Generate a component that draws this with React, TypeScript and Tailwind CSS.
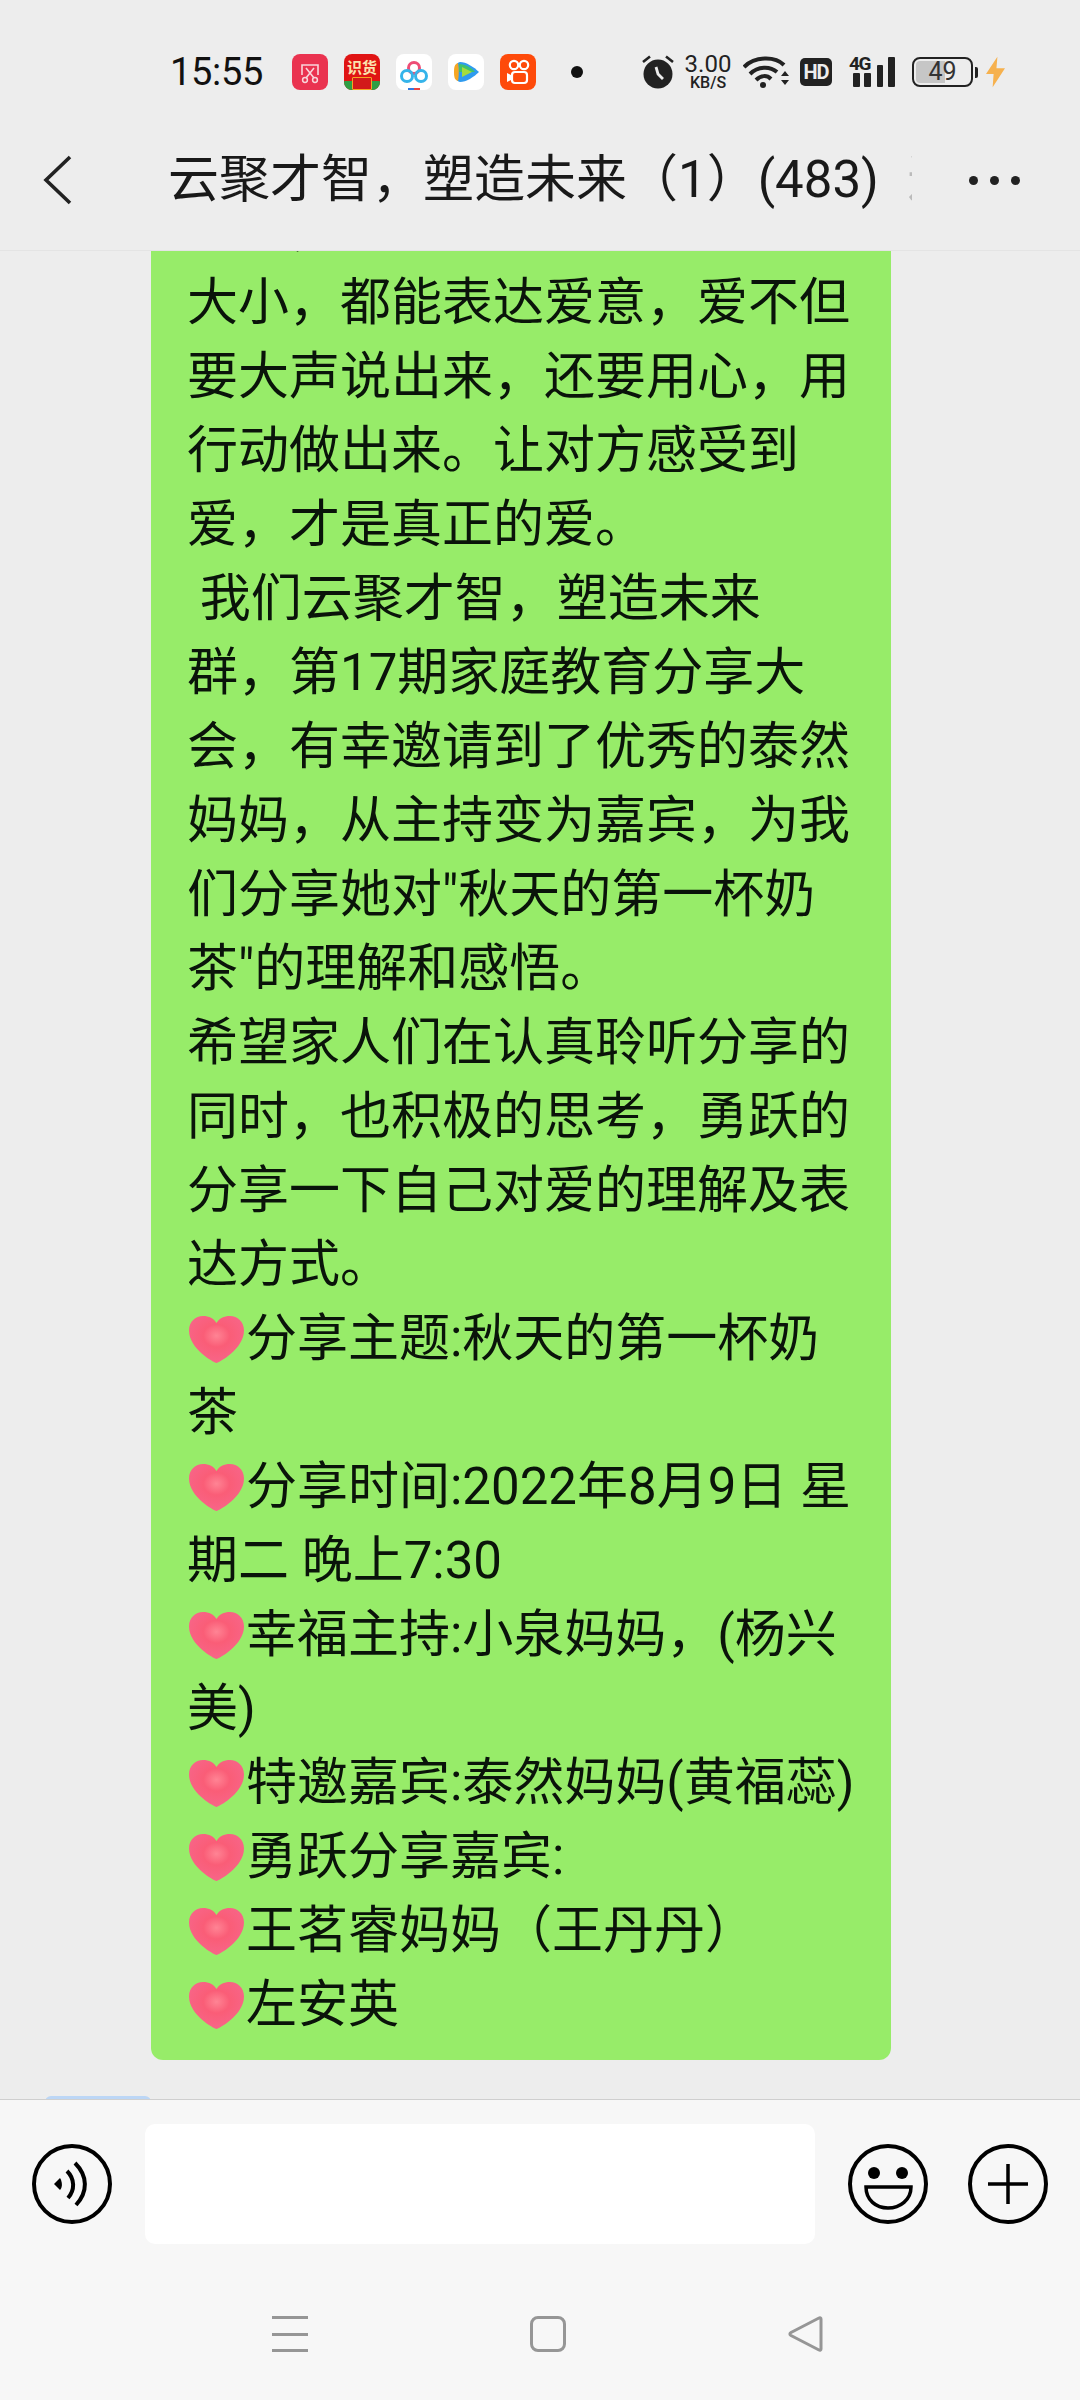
import React from "react";

const font = { fontFamily: 'Roboto, "Noto Sans CJK SC", sans-serif' };

function Heart() {
  return (
    <svg viewBox="0 0 55 47" className="ml-[2px] mr-[2px] w-[55px] h-[47px] shrink-0">
      <defs>
        <radialGradient id="hg" cx="50%" cy="42%" r="60%">
          <stop offset="0%" stopColor="#ff8494" />
          <stop offset="40%" stopColor="#fa5d77" />
          <stop offset="100%" stopColor="#f7668a" />
        </radialGradient>
      </defs>
      <path d="M27.500 47C25 46.500 0 33 0 14.500C0 5.500 6.500 0 14 0C20 0 25 2.500 27.500 7C30 2.500 35 0 41 0C48.500 0 55 5.500 55 14.500C55 33 30 46.500 27.500 47Z" fill="url(#hg)" />
    </svg>
  );
}

const lines: (string | { h: string })[] = [
  "其实，无论礼物的贵重还是",
  "大小，都能表达爱意，爱不但",
  "要大声说出来，还要用心，用",
  "行动做出来。让对方感受到",
  "爱，才是真正的爱。",
  " 我们云聚才智，塑造未来",
  "群，第17期家庭教育分享大",
  "会，有幸邀请到了优秀的泰然",
  "妈妈，从主持变为嘉宾，为我",
  '们分享她对"秋天的第一杯奶',
  '茶"的理解和感悟。',
  "希望家人们在认真聆听分享的",
  "同时，也积极的思考，勇跃的",
  "分享一下自己对爱的理解及表",
  "达方式。",
  { h: "分享主题:秋天的第一杯奶" },
  "茶",
  { h: "分享时间:2022年8月9日 星" },
  "期二 晚上7:30",
  { h: "幸福主持:小泉妈妈，(杨兴" },
  "美)",
  { h: "特邀嘉宾:泰然妈妈(黄福蕊)" },
  { h: "勇跃分享嘉宾:" },
  { h: "王茗睿妈妈（王丹丹）" },
  { h: "左安英" },
];

function AppIcons() {
  return (
    <div className="flex items-center gap-[16px]">
      <svg viewBox="0 0 36 36" className="w-[36px] h-[36px]">
        <rect width="36" height="36" rx="8" fill="#ea3350" />
        <path d="M10 21V11h16v10" fill="none" stroke="#f9d5da" strokeWidth="1.6" />
        <path d="M14 14l8 10M22 14l-8 10" stroke="#f9d5da" strokeWidth="1.6" />
        <circle cx="13" cy="26" r="2.400" fill="none" stroke="#f9d5da" strokeWidth="1.5" />
        <circle cx="23" cy="26" r="2.400" fill="none" stroke="#f9d5da" strokeWidth="1.5" />
      </svg>
      <div className="w-[36px] h-[36px] rounded-[8px] bg-[#e01414] overflow-hidden flex flex-col items-center">
        <div className="text-[15px] leading-[15px] mt-[5px] font-bold text-[#fbe3b0] whitespace-nowrap" style={{ fontFamily: '"Noto Sans CJK SC", sans-serif' }}>识货</div>
        <div className="mt-[3px] w-[20px] h-[13px] bg-[#d21a1a] border border-[#f5a623] rounded-[1px] shadow-[-8px_4px_0_#2f9e44,8px_4px_0_#2f9e44]" />
      </div>
      <svg viewBox="0 0 36 36" className="w-[36px] h-[36px]">
        <rect width="36" height="36" rx="8" fill="#fff" />
        <circle cx="18" cy="14" r="5.500" fill="none" stroke="#ee4d76" strokeWidth="3" />
        <circle cx="11" cy="22" r="5.500" fill="none" stroke="#35b4ea" strokeWidth="3" />
        <circle cx="25" cy="22" r="5.500" fill="none" stroke="#35b4ea" strokeWidth="3" />
        <rect x="12" y="34" width="6" height="2" fill="#3178e0" />
        <rect x="18" y="34" width="6" height="2" fill="#e8433f" />
      </svg>
      <svg viewBox="0 0 36 36" className="w-[36px] h-[36px]">
        <rect width="36" height="36" rx="8" fill="#fff" />
        <path d="M7 18C7 12 8 9 12 8C18 8 26 13 31 18C26 23 18 28 12 28C8 27 7 24 7 18Z" fill="#2f9bef" />
        <path d="M6 18C6 12 7 10 10 9C11 14 11 22 10 27C7 26 6 24 6 18Z" fill="#f6a623" />
        <path d="M11 10C17 10 24 14 27 18L11 18Z" fill="#3ec26d" />
        <path d="M14 13L24 18L14 23Z" fill="#a4dc3c" />
      </svg>
      <svg viewBox="0 0 36 36" className="w-[36px] h-[36px]">
        <rect width="36" height="36" rx="8" fill="#fe4a0a" />
        <circle cx="14" cy="11" r="4.200" fill="none" stroke="#fff" strokeWidth="2.200" />
        <circle cx="24" cy="11" r="4.200" fill="none" stroke="#fff" strokeWidth="2.200" />
        <rect x="12" y="18" width="15" height="11" rx="3" fill="none" stroke="#fff" strokeWidth="2.200" />
        <path d="M11 21L7 19V28L11 26Z" fill="#fff" />
      </svg>
    </div>
  );
}

function StatusRight() {
  return (
    <div className="flex items-center">
      <svg viewBox="0 0 32 34" className="w-[32px] h-[34px]">
        <circle cx="16" cy="19" r="14.500" fill="#222" />
        <path d="M1 7L8 1.500M31 7L24 1.500" stroke="#222" strokeWidth="2.600" />
        <path d="M14 12L16 19L21 24" fill="none" stroke="#ededed" strokeWidth="2.800" />
      </svg>
      <div className="ml-[9px] w-[50px] h-[36px] flex flex-col items-center text-[#222]">
        <div className="text-[24px] leading-[21px] whitespace-nowrap">3.00</div>
        <div className="text-[16px] leading-[15px] font-medium whitespace-nowrap">KB/S</div>
      </div>
      <svg viewBox="0 0 46 34" className="ml-[10px] w-[46px] h-[34px]">
        <path d="M1 12C12 1 32 1 41 10" fill="none" stroke="#222" strokeWidth="4" />
        <path d="M7 19C15 11 27 11 34 17" fill="none" stroke="#222" strokeWidth="4" />
        <path d="M13 25C18 20 24 20 28 24" fill="none" stroke="#222" strokeWidth="4" />
        <circle cx="20" cy="30" r="3" fill="#222" />
        <path d="M38 21L42 16L46 21ZM38 25L42 30L46 25Z" fill="#222" />
      </svg>
      <div className="ml-[11px] w-[32px] h-[28px] rounded-[5px] bg-[#222] text-[#ededed] text-[20px] leading-[28px] font-bold text-center tracking-[-1px]">HD</div>
      <div className="ml-[17px] relative w-[46px] h-[30px] pl-[4px] flex items-end">
        <div className="absolute left-0 top-[-2px] text-[19px] leading-[18px] font-bold text-[#222] tracking-[-1.5px]">4G</div>
        <div className="w-[7px] h-[14px] bg-[#222] rounded-[1px]" />
        <div className="ml-[4px] w-[7px] h-[14px] bg-[#222] rounded-[1px]" />
        <div className="ml-[6px] w-[6px] h-[22px] bg-[#222] rounded-[1px]" />
        <div className="ml-[5px] w-[7px] h-[30px] bg-[#222] rounded-[1px]" />
      </div>
      <div className="ml-[17px] relative w-[61px] h-[30px] rounded-[8px] border-2 border-[#222] p-[2px]">
        <div className="w-[29px] h-full rounded-l-[4px] bg-[#c6c6c6]" />
        <div className="absolute inset-0 text-center text-[25px] leading-[26px] text-[#333]">49</div>
      </div>
      <div className="ml-[2px] w-[3px] h-[11px] bg-[#222] rounded-r-[2px]" />
      <svg viewBox="0 0 20 32" className="ml-[8px] w-[19px] h-[32px]">
        <path d="M12 0L0 18H8L7 32L20 12H11Z" fill="#f6b14e" />
      </svg>
    </div>
  );
}

function Header() {
  return (
    <header className="h-[251px] bg-[#ededed] flex flex-col border-b border-[#e4e4e4]">
      <div className="h-[54px]" />
      <div className="h-[36px] flex items-center pl-[170px] pr-[75px]">
        <div className="w-[122px] text-[38px] leading-[36px] text-[#111] tracking-[-0.3px]">15:55</div>
        <AppIcons />
        <div className="ml-[35px] w-[12px] h-[12px] rounded-full bg-[#111]" />
        <div className="flex-1" />
        <StatusRight />
      </div>
      <div className="flex-1 flex items-center pt-[20px]">
        <div className="flex items-center h-[90px] w-full">
          <svg viewBox="0 0 30 50" className="ml-[43px] w-[30px] h-[50px]">
            <path d="M27 2L3 25L27 48" fill="none" stroke="#222" strokeWidth="3.600" />
          </svg>
          <div className="ml-[95px] w-[744px] whitespace-nowrap overflow-hidden text-[51px] leading-[70px] text-[#191919]">
            云聚才智，塑造未来（1）(483)
            <span className="ml-[28px] text-[#bbb]">近</span>
          </div>
          <div className="ml-[57px] flex gap-[12px]">
            <div className="w-[9px] h-[9px] rounded-full bg-[#222]" />
            <div className="w-[9px] h-[9px] rounded-full bg-[#222]" />
            <div className="w-[9px] h-[9px] rounded-full bg-[#222]" />
          </div>
        </div>
      </div>
    </header>
  );
}

function Messages() {
  return (
    <main className="h-[1848px] overflow-hidden bg-[#ededed]">
      <div className="ml-[151px] w-[740px] mt-[-91px] pt-[32px] pb-[18px] pl-[36px] bg-[#97ec69] rounded-[12px] text-[51px] leading-[74px] text-[#0a140a]">
        {lines.map((l, i) =>
          typeof l === "string" ? (
            <div key={i} className="whitespace-pre h-[74px]">{l}</div>
          ) : (
            <div key={i} className="whitespace-pre h-[74px] flex items-center">
              <Heart />
              <span>{l.h}</span>
            </div>
          )
        )}
      </div>
      <div className="ml-[45px] mt-[36px] w-[106px] h-[60px] rounded-[6px] bg-[#bcd6f5]" />
    </main>
  );
}

function Composer() {
  return (
    <footer className="h-[301px] bg-[#f7f7f7] border-t border-[#cfcfcf] flex flex-col">
      <div className="h-[145px] pt-[24px] flex items-start">
        <svg viewBox="0 0 80 80" className="ml-[32px] mt-[20px] w-[80px] h-[80px]">
          <circle cx="40" cy="40" r="38" fill="none" stroke="#000" strokeWidth="4" />
          <path d="M22 40L28 34C30 37 31 43 28 46Z" fill="#000" />
          <path d="M35 27C43 35 43 46 36 54" fill="none" stroke="#000" strokeWidth="4" />
          <path d="M43 19C56 32 56 48 44 61" fill="none" stroke="#000" strokeWidth="4" />
        </svg>
        <div className="ml-[33px] w-[670px] h-[120px] rounded-[10px] bg-white" />
        <svg viewBox="0 0 80 80" className="ml-[33px] mt-[20px] w-[80px] h-[80px]">
          <circle cx="40" cy="40" r="38" fill="none" stroke="#000" strokeWidth="4" />
          <circle cx="26" cy="29" r="6" fill="#000" />
          <circle cx="54" cy="29" r="6" fill="#000" />
          <path d="M18 43H63C63 56 52 64 40 64C28 64 18 56 18 43Z" fill="none" stroke="#000" strokeWidth="3.500" />
        </svg>
        <svg viewBox="0 0 80 80" className="ml-[40px] mt-[20px] w-[80px] h-[80px]">
          <circle cx="40" cy="40" r="38" fill="none" stroke="#000" strokeWidth="4" />
          <path d="M40 20V60M20 40H60" stroke="#000" strokeWidth="3.500" />
        </svg>
      </div>
      <nav className="flex-1 flex items-start pt-[71px] pl-[272px]">
        <div className="w-[36px] h-[36px] flex flex-col justify-between">
          <div className="h-[3px] bg-[#969696]" />
          <div className="h-[3px] bg-[#969696]" />
          <div className="h-[3px] bg-[#969696]" />
        </div>
        <div className="ml-[222px] w-[36px] h-[36px] rounded-[8px] border-[3px] border-[#969696]" />
        <svg viewBox="0 0 36 36" className="ml-[222px] w-[36px] h-[36px]">
          <path d="M33 3C33 2 32 1.500 31 2L3 16.500C1.500 17.500 1.500 18.500 3 19.500L31 34C32 34.500 33 34 33 33Z" fill="none" stroke="#969696" strokeWidth="3" />
        </svg>
      </nav>
    </footer>
  );
}

export default function App() {
  return (
    <div className="w-[1080px] h-[2400px] overflow-hidden flex flex-col" style={font}>
      <Header />
      <Messages />
      <Composer />
    </div>
  );
}
